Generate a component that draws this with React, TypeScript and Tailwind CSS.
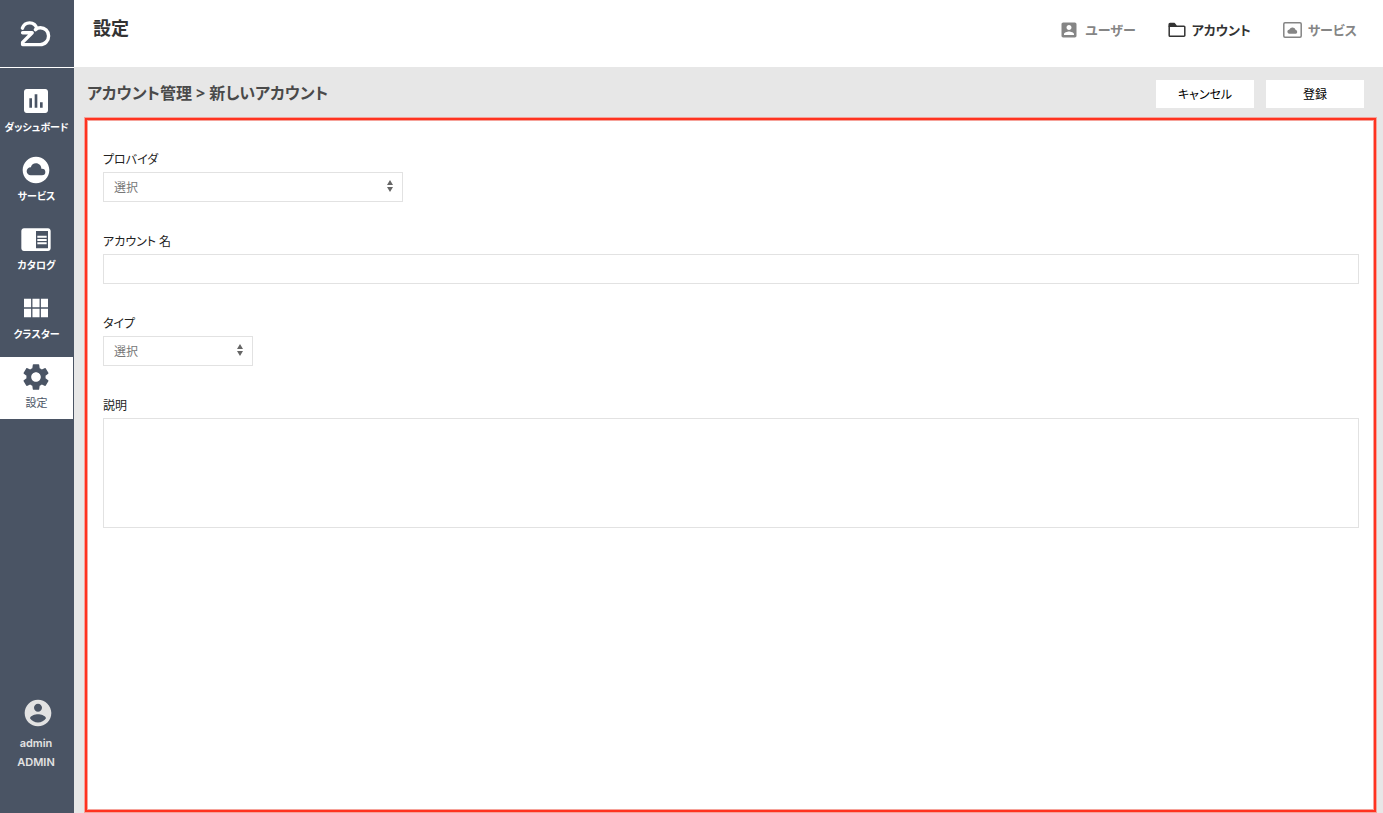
import type { ReactNode } from "react"
import type { IconType } from "react-icons"
import { MdAssessment, MdChromeReaderMode, MdCloudCircle, MdSettings, MdViewModule } from "react-icons/md"

const menus: { label: string; icon: IconType; active?: boolean }[] = [
  { label: "ダッシュボード", icon: MdAssessment },
  { label: "サービス", icon: MdCloudCircle },
  { label: "カタログ", icon: MdChromeReaderMode },
  { label: "クラスター", icon: MdViewModule },
  { label: "設定", icon: MdSettings, active: true },
]

function Logo() {
  return (
    <svg viewBox="0 0 32 28" className="h-7 w-8" fill="none" stroke="#fff" strokeWidth="3.4" strokeLinejoin="round" strokeLinecap="round">
      <path d="M2.400 8.200C3.600 4.900 6.300 2.900 9.600 2.900c3.600 0 6.300 2.200 7.300 5.800M15.400 9.600c1.500-1.300 3.100-1.900 5-1.900 4.500 0 8.200 3.600 8.200 8.200s-3.600 8.700-8.500 8.700H2.600v-2.200l9.600-9.600H2.600" />
    </svg>
  )
}

function AccountCircle() {
  return (
    <svg viewBox="0 0 24 24" className="ml-0.5 size-8" fill="currentColor">
      <path d="M12 2C6.480 2 2 6.480 2 12s4.480 10 10 10 10-4.480 10-10S17.520 2 12 2zm0 3c1.660 0 3 1.340 3 3s-1.340 3-3 3-3-1.340-3-3 1.340-3 3-3zm0 14.200c-2.500 0-4.710-1.280-6-3.220.03-1.990 4-3.080 6-3.080 1.990 0 5.970 1.090 6 3.080-1.290 1.940-3.500 3.220-6 3.220z" />
    </svg>
  )
}

function AccountBox() {
  return (
    <svg viewBox="0 0 24 24" className="size-5" fill="currentColor">
      <path d="M3 5v14c0 1.100.89 2 2 2h14c1.100 0 2-.9 2-2V5c0-1.100-.9-2-2-2H5c-1.110 0-2 .9-2 2zm12 4c0 1.660-1.340 3-3 3s-3-1.340-3-3 1.340-3 3-3 3 1.340 3 3zm-9 8c0-2 4-3.100 6-3.100s6 1.100 6 3.100v1H6v-1z" />
    </svg>
  )
}

function Folder() {
  return (
    <svg viewBox="0 0 18 16" className="h-4 w-[18px]" fill="none" stroke="currentColor" strokeWidth="1.5" strokeLinejoin="round">
      <path d="M1.200 4.200h14.800a.8.8 0 0 1 .8.8v8.400a.8.8 0 0 1-.8.800H2a.8.8 0 0 1-.8-.8z" />
      <path d="M1.200 4.200V2.400a.8.8 0 0 1 .8-.8h4.400l1.600 2.200z" fill="currentColor" />
    </svg>
  )
}

function CloudFrame() {
  return (
    <svg viewBox="0 0 19 16" className="h-4 w-[19px]" fill="none">
      <rect x="0.8" y="0.8" width="17.4" height="14.4" rx="1.2" stroke="currentColor" strokeWidth="1.5" />
      <path d="M6.700 11.800a2.200 2.200 0 0 1-.3-4.400 3.400 3.400 0 0 1 6.300.7 1.900 1.900 0 0 1 .1 3.700z" fill="currentColor" />
    </svg>
  )
}

function Sidebar() {
  return (
    <aside className="flex w-[74px] shrink-0 flex-col bg-[#4a5464] text-white">
      <a href="#" aria-label="ホーム" className="flex h-[68px] items-center justify-center border-b border-white pr-0.5">
        <Logo />
      </a>
      <nav className="mt-[13px] flex flex-col gap-[7px] pr-px">
        {menus.map(({ label, icon: Icon, active }) => (
          <a
            key={label}
            href="#"
            className={`flex h-[62px] flex-col items-center pt-1 whitespace-nowrap ${
              active ? "bg-white text-[11px] text-[#4a5464]" : "text-[10px] font-bold"
            }`}
          >
            <Icon className="mr-0.5 size-8" />
            <span className="leading-5">{label}</span>
          </a>
        ))}
      </nav>
      <div className="mt-auto flex flex-col items-center pb-[41px] text-[#e2e2e2]">
        <AccountCircle />
        <div className="mt-[5px] pr-0.5 text-center font-[Inter,sans-serif] text-[11px] leading-[19px] font-semibold">
          <p>admin</p>
          <p>ADMIN</p>
        </div>
      </div>
    </aside>
  )
}

function Tab({ icon, label, active }: { icon: ReactNode; label: string; active?: boolean }) {
  return (
    <a href="#" className={`flex items-center gap-1.5 text-[13px] leading-5 font-bold ${active ? "text-[#333]" : "text-[#858585]"}`}>
      {icon}
      {label}
    </a>
  )
}

function Field({ id, label, children }: { id: string; label: string; children: ReactNode }) {
  return (
    <div className="flex flex-col">
      <label htmlFor={id} className="mb-px text-xs leading-[22px] text-[#222]">
        {label}
      </label>
      {children}
    </div>
  )
}

function Select({ id, width }: { id: string; width: string }) {
  return (
    <div className={`relative ${width}`}>
      <select id={id} className="block h-[30px] w-full appearance-none border border-[#e2e2e2] bg-white px-2.5 pt-0.5 text-xs text-[#777]">
        <option>選択</option>
      </select>
      <svg viewBox="0 0 6 12" className="pointer-events-none absolute top-2 right-2.5 h-3 w-1.5" fill="#666">
        <path d="M3 0l3 5H0zM3 12l3-5H0z" />
      </svg>
    </div>
  )
}

export default function App() {
  return (
    <div className="flex min-h-screen bg-[#e7e7e7] font-['Noto_Sans','Noto_Sans_CJK_JP',sans-serif] [font-feature-settings:'palt']">
      <Sidebar />
      <div className="flex min-w-0 flex-1 flex-col">
        <header className="flex h-[67px] items-start justify-between bg-white pr-[26px] pl-[19px]">
          <h1 className="mt-4 text-lg leading-6 font-bold text-[#333]">設定</h1>
          <nav className="mt-5 flex items-center gap-8">
            <Tab icon={<AccountBox />} label="ユーザー" />
            <Tab icon={<Folder />} label="アカウント" active />
            <Tab icon={<CloudFrame />} label="サービス" />
          </nav>
        </header>
        <div className="flex h-[51px] items-center justify-between pr-[19px] pl-[13px]">
          <h2 className="text-base font-bold text-[#4a4a4a]">アカウント管理 &gt; 新しいアカウント</h2>
          <div className="flex gap-3 pt-0.5">
            <button type="button" className="h-7 w-[98px] bg-white pt-0.5 text-xs text-black">
              キャンセル
            </button>
            <button type="button" className="h-7 w-[98px] bg-white pt-0.5 text-xs text-black">
              登録
            </button>
          </div>
        </div>
        <main className="mr-[7px] mb-px ml-[11px] flex-1 border-2 border-[#ff3320] bg-white shadow-[0_0_0_1px_#f5a39b,inset_0_0_0_1px_#f5a39b]">
          <form className="flex flex-col gap-[29px] pt-[29px] pr-[15px] pl-4">
            <Field id="provider" label="プロバイダ">
              <Select id="provider" width="w-[300px]" />
            </Field>
            <Field id="name" label="アカウント 名">
              <input id="name" type="text" className="h-[30px] border border-[#e2e2e2] px-2.5 text-xs" />
            </Field>
            <Field id="type" label="タイプ">
              <Select id="type" width="w-[150px]" />
            </Field>
            <Field id="description" label="説明">
              <textarea id="description" className="h-[110px] resize-none border border-[#e2e2e2] p-2.5 text-xs" />
            </Field>
          </form>
        </main>
      </div>
    </div>
  )
}
